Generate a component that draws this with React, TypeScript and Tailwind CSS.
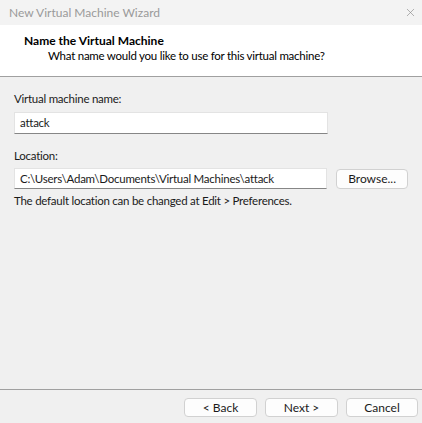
import { X } from "lucide-react";

const font = { fontFamily: 'Lato, "Noto Sans", sans-serif' };

function WizButton({ label, w }: { label: string; w: string }) {
  return (
    <button
      className={`${w} h-[19px] rounded-[4px] border border-[#d1d1d1] bg-[#fdfdfd] text-[12px] leading-none text-[#1a1a1a]`}
    >
      {label}
    </button>
  );
}

export default function App() {
  return (
    <div
      className="flex h-[423px] w-[422px] flex-col bg-[#f0f0f0] text-[11.5px] tracking-[-0.25px] text-[#1a1a1a]"
      style={font}
    >
      {/* title bar */}
      <div className="flex h-[25px] items-center justify-between bg-[#f3f3f3] pl-[9px] pr-[5px] tracking-normal">
        <span className="text-[12px] text-[#9a9a9a]">New Virtual Machine Wizard</span>
        <X className="h-[13px] w-[13px] text-[#8a8a8a]" strokeWidth={1.2} />
      </div>

      {/* header */}
      <div className="h-[52px] border-b border-[#a0a0a0] bg-white pt-[8px]">
        <div className="pl-[24px] text-[12px] font-bold leading-[15px] tracking-normal text-black">
          Name the Virtual Machine
        </div>
        <div className="pl-[48px] leading-[15px] text-black">
          What name would you like to use for this virtual machine?
        </div>
      </div>

      {/* body */}
      <div className="flex flex-1 flex-col px-[14px] pt-[14px]">
        <div className="leading-[16px]">Virtual machine name:</div>
        <div className="mt-[5px] flex h-[22px] w-[314px] items-center border border-[#e3e3e3] border-b-[#868686] bg-white pl-[5px]">
          attack
        </div>
        <div className="mt-[14px] leading-[16px]">Location:</div>
        <div className="mt-[4px] flex items-center gap-[9px]">
          <div className="flex h-[21px] w-[314px] items-center border border-[#e3e3e3] border-b-[#868686] bg-white pl-[5px]">
            C:\Users\Adam\Documents\Virtual Machines\attack
          </div>
          <button className="h-[20px] w-[72px] rounded-[4px] border border-[#d1d1d1] bg-[#fdfdfd] text-[12px] leading-none tracking-normal">
            Browse...
          </button>
        </div>
        <div className="mt-[4px] leading-[16px]">
          The default location can be changed at Edit &gt; Preferences.
        </div>
      </div>

      {/* footer */}
      <div className="h-[34px] border-t border-[#a0a0a0] pt-[8px] tracking-normal">
        <div className="flex justify-end gap-[8px] pr-[4px]">
          <WizButton label="< Back" w="w-[73px]" />
          <WizButton label="Next >" w="w-[73px]" />
          <WizButton label="Cancel" w="w-[72px]" />
        </div>
      </div>
    </div>
  );
}
